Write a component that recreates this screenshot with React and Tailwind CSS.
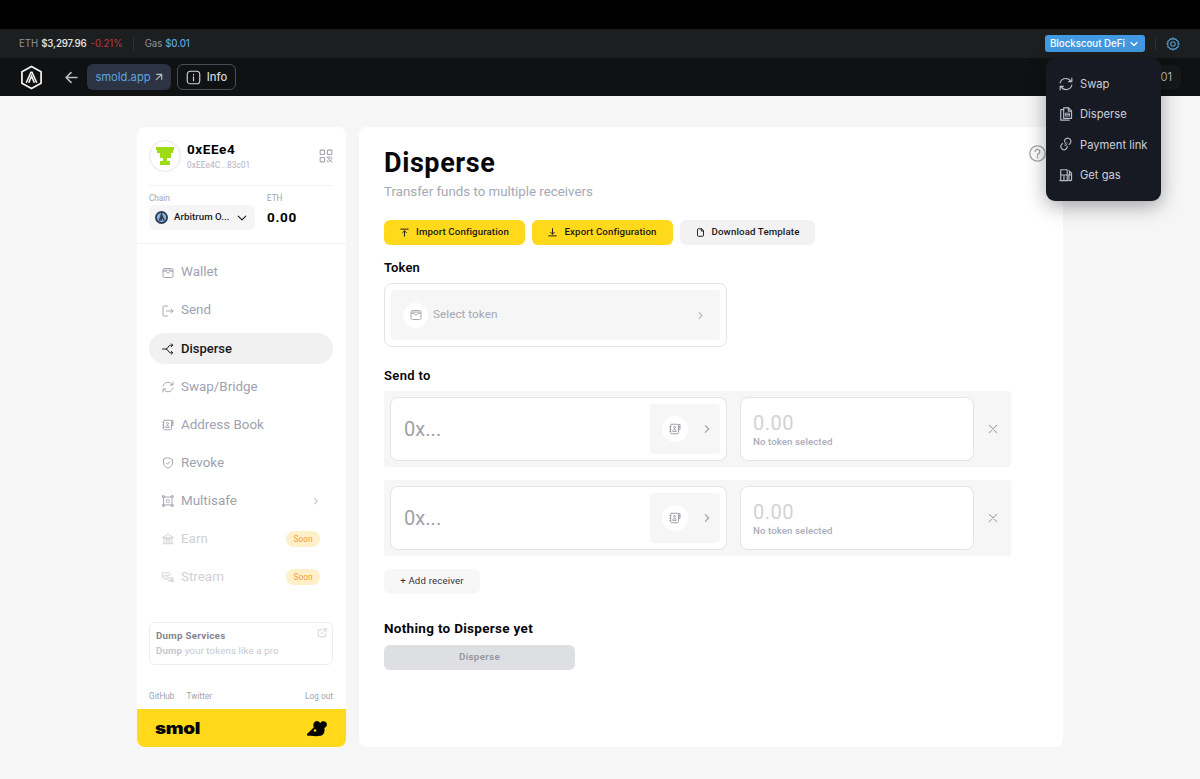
import React from "react";

const paths = {
  wallet: (
    <>
      <rect x="2" y="3" width="20" height="18" rx="3" />
      <path d="M2 8.5h6c.5 0 .8.4 1 1a3.1 3.1 0 0 0 6 0c.2-.6.5-1 1-1h6" />
      <path d="M5 6.2h14" />
    </>
  ),
  send: (
    <>
      <path d="M11 2H4a2 2 0 0 0-2 2v16a2 2 0 0 0 2 2h7" />
      <path d="M9 12h13M18 8l4 4-4 4" />
    </>
  ),
  disperse: (
    <>
      <path d="M1 12h8M9 12c3 0 3-7.500 8-7.500h4M9 12c3 0 3 7.500 8 7.500h4" />
      <path d="M18.500 1.500l3 3-3 3M18.500 16.500l3 3-3 3" />
    </>
  ),
  swap: (
    <>
      <path d="M2 10C3 5.500 7 2.500 12 2.500c3.600 0 6.700 1.900 8.400 5M22 2v6h-5.500" />
      <path d="M22 14c-1 4.500-5 7.500-10 7.500-3.600 0-6.700-1.900-8.400-5M2 22v-6h5.500" />
    </>
  ),
  book: (
    <>
      <rect x="3" y="2.500" width="16" height="19" rx="2.500" />
      <path d="M19 3h3v5h-3M19 8h3v5h-3M1.500 7H4M1.500 12H4M1.500 17H4" />
      <circle cx="11" cy="9" r="2" />
      <path d="M7.500 16c0-4 7-4 7 0z" />
    </>
  ),
  revoke: (
    <>
      <path d="M12 1.500 21 5v7c0 5-4 8.500-9 10.500C7 20.500 3 17 3 12V5z" />
      <path d="m8.500 12 2.500 2.500 4.500-5" />
    </>
  ),
  multisafe: (
    <>
      <rect x="4" y="4" width="16" height="16" />
      <rect x="1.500" y="1.500" width="3" height="3" />
      <rect x="19.500" y="1.500" width="3" height="3" />
      <rect x="1.500" y="19.500" width="3" height="3" />
      <rect x="19.500" y="19.500" width="3" height="3" />
      <path d="M9.500 9.500h5v5h-5z" strokeWidth="1.400" />
    </>
  ),
  earn: (
    <>
      <path d="M2 8.500 12 2l10 6.500zM4 9v11M20 9v11M2 21.500h20M8.500 12v7M12 12v7M15.500 12v7M6 12h12" />
    </>
  ),
  stream: (
    <>
      <path d="M1 3h4l2 2 3-2h4l3 4-3 2-4-1-3 2H2M1 6v7l4 3h4M9 13l5 7h8v-6h-8l-3-3M17 17h2v4h4" />
    </>
  ),
  chevron: <path d="m8 4 8 8-8 8" />,
  down: <path d="m3 7.500 9 9 9-9" />,
  close: <path d="M3 3l18 18M21 3 3 21" />,
  external: (
    <>
      <path d="M11 4H5a2 2 0 0 0-2 2v13a2 2 0 0 0 2 2h13a2 2 0 0 0 2-2v-6" />
      <path d="M10 14 22 2M15 2h7v7" />
    </>
  ),
  importUp: <path d="M2 3h20M12 22V8M7 12.500l5-5 5 5" />,
  exportDown: <path d="M2 21h20M12 2v14M7 11.500l5 5 5-5" />,
  file: (
    <>
      <path d="M14 2H6a2 2 0 0 0-2 2v16a2 2 0 0 0 2 2h12a2 2 0 0 0 2-2V8z" />
      <path d="M14 2v6h6" />
    </>
  ),
  back: <path d="M22 12H2M11 3l-9 9 9 9" />,
  openUp: <path d="M4 20 20 4M5 4h15v15" />,
  info: (
    <>
      <rect x="2" y="2" width="20" height="20" rx="5" />
      <path d="M12 11v6M12 7v1" />
    </>
  ),
  help: (
    <>
      <circle cx="12" cy="12" r="10.800" />
      <path d="M8.800 9.200a3.200 3.200 0 1 1 4.800 3c-1.200.6-1.600 1.100-1.600 2.300M12 17v1.200" />
    </>
  ),
  qr: (
    <>
      <rect x="2" y="2" width="7.500" height="7.500" rx="1" />
      <rect x="14.500" y="2" width="7.500" height="7.500" rx="1" />
      <rect x="2" y="14.500" width="7.500" height="7.500" rx="1" />
      <path d="M14 14h2M18 14h1M22 14v.1M16 17h2M21 17h1M14 20v.1M18 20h2M21 22h1M15 22h1" />
    </>
  ),
  docs: (
    <>
      <path d="M8 1.500h8.500L21.500 6.500v13H8z" />
      <path d="M8 4.500H3v18h14.500M16 1.500V7h5.500" />
      <path d="M11.500 10.500h6.500v5h-6.500zM11.500 13h6.500" strokeWidth="1.500" />
    </>
  ),
  payment: (
    <>
      <path d="M9.500 8V6.500a5.500 5.500 0 1 1 9.700 4.500l-1.700 1.800" />
      <path d="M6 11.200 4.500 12.800a5.500 5.500 0 1 0 9.500 4.700V16" />
      <path d="M13.800 10c-2.500-1.300-4.800.9-2 2s1 3.500-2 2" strokeWidth="1.600" />
    </>
  ),
  gas: (
    <>
      <path d="M3 21V3h11v18M1.500 21.500h14M3 12h11M8.500 12v9M14 12h3v7.500a2 2 0 0 0 4.500 0V9L17 4.500M21.500 12H18V7" />
    </>
  ),
  gear: (
    <>
      <circle cx="12" cy="12" r="3.800" />
      <path d="M12 1.500 14 4l3-.7 1.300 2.600 2.700 1.300-.6 3 2.100 1.800-2.100 2 .6 3-2.700 1.200L17 20.700l-3-.7-2 2.500-2-2.500-3 .7-1.300-2.500L3 17l.6-3-2.100-2 2.100-1.800-.6-3 2.700-1.300L7 3.300l3 .7z" />
    </>
  ),
};

function Icon({ name, className = "size-3", w = 2 }) {
  return (
    <svg viewBox="0 0 24 24" fill="none" stroke="currentColor" strokeWidth={w} strokeLinecap="round" strokeLinejoin="round" className={`shrink-0 ${className}`}>
      {paths[name]}
    </svg>
  );
}

function TopBars() {
  return (
    <header className="relative font-['Inter',sans-serif]">
      <div className="h-[29px] bg-black" />
      <div className="flex h-[29px] items-center bg-[#1c1e20] pl-[19px] pr-[20px] text-[9.700px] tracking-[-0.050px] text-[#8f9398]">
        <span className="pt-[2px]">ETH</span>
        <span className="ml-[3px] pt-[2px] font-semibold tracking-[-0.200px] text-[#dedede]">$3,297.96</span>
        <span className="ml-[4px] pt-[2px] text-[#b9393f]">-0.21%</span>
        <span className="ml-[10px] h-3 w-px bg-[#303336]" />
        <span className="ml-[11px] pt-[2px]">Gas</span>
        <span className="ml-[3px] pt-[2px] font-medium tracking-[-0.200px] text-[#5aa3dc]">$0.01</span>
        <button className="ml-auto flex h-[17px] w-[100px] items-center justify-between rounded-[3px] bg-[#4299e1] pl-[5px] pr-[7px] text-[9.700px] font-medium tracking-normal text-white">
          <span className="whitespace-nowrap pt-[2px]">Blockscout DeFi</span>
          <Icon name="down" className="size-[8px]" w={3.600} />
        </button>
        <span className="ml-[10px] h-3 w-px bg-[#303336]" />
        <Icon name="gear" className="ml-[10px] size-[14px] text-[#4f9bd2]" w={2} />
      </div>
      <div className="flex h-[38px] items-center bg-[#101112] pl-[20px] pr-[19px]">
        <svg viewBox="0 0 24 26" className="h-[25px] w-[23px] shrink-0" fill="none" stroke="#f2f2f2">
          <path d="M12 1.500 22 7v12l-10 5.500L2 19V7z" strokeWidth="1.800" strokeLinejoin="round" />
          <path d="M6.500 18.500 11.500 7.500h1l5 11M9.200 18.500 12 11.500l3 7" strokeWidth="1.700" />
        </svg>
        <Icon name="back" className="ml-[22px] size-[13px] text-[#b6bdc8]" w={3} />
        <a className="ml-[9px] flex h-[26px] w-[84px] items-center justify-center gap-1 rounded-md bg-[#2c3444] text-[11.200px] text-[#5ea5dc]">
          smold.app
          <Icon name="openUp" className="size-[8px] text-[#b6bdc8]" w={3.500} />
        </a>
        <a className="ml-[6px] flex h-[26px] w-[59px] items-center justify-center gap-[6px] rounded-md border-[1.500px] border-[#4a4e57] text-[11.200px] font-medium text-[#d3d6db]">
          <Icon name="info" className="size-[15px]" w={1.800} />
          Info
        </a>
        <span className="ml-auto flex h-[24px] w-[100px] items-center justify-end rounded-md bg-[#17181a] pr-[9px] text-[11.200px] text-[#b4b4b4]">01</span>
      </div>
      <nav className="absolute left-[1046px] top-[58px] flex h-[143px] w-[115px] flex-col rounded-[9px] bg-[#171923] pl-[13px] pt-[11px] text-[11.200px] text-[#ccd0d7] shadow-[0_5px_20px_rgba(0,0,0,0.35)]">
        {[
          ["swap", "Swap"],
          ["docs", "Disperse"],
          ["payment", "Payment link"],
          ["gas", "Get gas"],
        ].map(([icon, label]) => (
          <a key={icon} className="flex h-[30.200px] items-center gap-[7px] whitespace-nowrap">
            <Icon name={icon} className="size-[14px] text-[#b5bdc8]" w={2} />
            <span className="pt-px">{label}</span>
          </a>
        ))}
      </nav>
    </header>
  );
}

const navItems = [
  ["wallet", "Wallet"],
  ["send", "Send"],
  ["disperse", "Disperse"],
  ["swap", "Swap/Bridge"],
  ["book", "Address Book"],
  ["revoke", "Revoke"],
  ["multisafe", "Multisafe"],
  ["earn", "Earn"],
  ["stream", "Stream"],
];

function Sidebar() {
  return (
    <aside className="flex h-[620px] w-[209px] flex-col overflow-hidden rounded-lg bg-white">
      <div className="ml-3 mr-[13px] flex h-[59px] shrink-0 items-center border-b border-[#f3f3f5]">
        <div className="flex size-8 items-center justify-center rounded-full border border-[#e6e6ec]">
          <svg viewBox="0 0 18 18" className="size-[18px]" fill="#9ddb13">
            <path d="M0 0h18v3h-1v3h-2v5h-4v3h3v4H4v-4h3v-3H4V6H1V3H0z" />
          </svg>
        </div>
        <div className="ml-[6px] flex flex-col">
          <span className="text-[13.500px] font-bold leading-[15px] tracking-[0.600px] text-black">0xEEe4</span>
          <span className="mt-[3px] text-[8.300px] leading-[10px] tracking-[0.080px] text-[#b2b3bf]">0xEEe4C...83c01</span>
        </div>
        <Icon name="qr" className="ml-auto size-[14px] text-[#a2a3b0]" w={1.900} />
      </div>
      <div className="flex h-[58px] shrink-0 border-b border-[#f3f3f5] px-3 pt-[6px]">
        <div className="w-[106px]">
          <div className="text-[8.200px] leading-[12px] text-[#a2a3b0]">Chain</div>
          <div className="mt-px flex h-[25px] items-center rounded-md bg-[#f5f5f5] px-[6px] text-[9.700px] font-medium text-[#18181b]">
            <svg viewBox="0 0 24 24" className="mr-[6px] size-[13px]">
              <circle cx="12" cy="12" r="12" fill="#2d3c56" />
              <circle cx="12" cy="12" r="8.500" fill="#8db5de" />
              <path d="m8 18 4-12 5 12M11 18l2-7" fill="none" stroke="#2d3c56" strokeWidth="2.500" />
            </svg>
            <span className="tracking-[0.050px]">Arbitrum O...</span>
            <Icon name="down" className="ml-auto mr-[2px] size-[10px]" w={2.600} />
          </div>
        </div>
        <div className="ml-3">
          <div className="text-[8.200px] leading-[12px] text-[#a2a3b0]">ETH</div>
          <div className="mt-px text-[13.500px] font-bold leading-[25px] tracking-[0.700px] text-black">0.00</div>
        </div>
      </div>
      <nav className="ml-3 mr-[13px] mt-[13px] flex flex-col gap-[7.060px]">
        {navItems.map(([icon, label], i) => (
          <a
            key={icon}
            className={`flex h-[31px] items-center rounded-full pl-[13px] ${
              i === 2 ? "bg-[#f1f1f1] text-[13px] font-medium text-[#18181b]" : i > 6 ? "text-[13.400px] text-[#d0d0d5]" : "text-[13.400px] text-[#a0a2af]"
            }`}
          >
            <Icon name={icon} className="mr-[7px] size-3" w={1.900} />
            {label}
            {i === 6 && <Icon name="chevron" className="ml-auto mr-[13px] size-2" w={3} />}
            {i > 6 && (
              <span className="ml-auto mr-[13px] flex h-4 w-[34px] items-center justify-center rounded-full bg-[#fff0c9] text-[8.300px] font-normal tracking-normal text-[#f59a35]">Soon</span>
            )}
          </a>
        ))}
      </nav>
      <div className="ml-3 mr-[13px] mt-[30px] flex h-[43px] shrink-0 justify-between rounded-md border border-[#ededf1] pl-[6px] pr-[5px] pt-[6px]">
        <div>
          <div className="text-[9.700px] font-bold leading-[13px] tracking-[0.300px] text-[#83848f]">Dump Services</div>
          <div className="text-[9.700px] leading-[18px] tracking-[0.130px] text-[#c6c7d1]"><b>Dump</b> your tokens like a pro</div>
        </div>
        <Icon name="external" className="mt-[-1px] size-[10px] text-[#cfcfd6]" w={2.200} />
      </div>
      <div className="ml-3 mr-[13px] mt-auto flex h-[26px] shrink-0 items-center gap-3 pt-px text-[8.200px] tracking-[0.050px] text-[#a0a1ac]">
        <span>GitHub</span>
        <span>Twitter</span>
        <span className="ml-auto">Log out</span>
      </div>
      <div className="flex h-[38px] shrink-0 items-center justify-between bg-[#ffd91a] px-[18px]">
        <span className="origin-left scale-x-[1.180] font-['Inter',sans-serif] text-[16px] font-black leading-none tracking-[-0.300px] text-black">smol</span>
        <svg viewBox="0 0 22 17" className="h-[17px] w-[22px]">
          <path d="M1 14 7.800 7.500C6.500 4 8.300 1 11 1c1.600 0 2.700 1 3.200 2.300C14.800 1.600 16.300 1 17.800 1.200c2.200.3 3.400 2 3.100 3.900-.3 1.500-1.200 2.500-2.600 2.900 1 4-.7 7.200-3.800 7.800C10 16.700 4 15.800 1 15.500z" fill="#050505" />
          <circle cx="9" cy="10.500" r="1.300" fill="#ffd91a" />
        </svg>
      </div>
    </aside>
  );
}

function ActionButton({ icon, children, className }) {
  return (
    <button className={`flex h-[25px] items-center justify-center whitespace-nowrap rounded-md text-[9.700px] font-medium tracking-[0.120px] text-[#18181b] ${className}`}>
      <Icon name={icon} className="mr-[7px] size-[9px]" w={2.500} />
      {children}
    </button>
  );
}

function Receiver() {
  return (
    <div className="flex h-[76px] w-[627px] items-center rounded-[3px] bg-[#f6f6f6] pl-[6px]">
      <div className="flex h-16 w-[337px] items-center rounded-lg border border-[#e4e4e7] bg-white pl-[13px] pr-[6px]">
        <span className="text-[20px] tracking-[0.050px] text-[#a0a1ac]">0x...</span>
        <div className="ml-auto flex h-[50px] w-[70px] items-center rounded-[4px] bg-[#f6f6f6] pl-3">
          <span className="flex size-[26px] items-center justify-center rounded-full bg-white">
            <Icon name="book" className="size-3 text-[#a0a1ac]" w={2} />
          </span>
          <Icon name="chevron" className="ml-[14px] size-[10px] text-[#a0a1ac]" w={2.700} />
        </div>
      </div>
      <div className="ml-[13px] flex h-16 w-[234px] flex-col rounded-lg border border-[#e4e4e7] bg-white pl-3 pt-[14px]">
        <span className="text-[20px] leading-[23px] tracking-[0.500px] text-[#d2d2d7]">0.00</span>
        <span className="text-[9.700px] font-medium leading-[14px] tracking-[0.080px] text-[#abadb9]">No token selected</span>
      </div>
      <Icon name="close" className="ml-[14px] size-[10px] text-[#9d9ea8]" w={2.500} />
    </div>
  );
}

function MainPanel() {
  return (
    <main className="flex h-[620px] w-[704px] flex-col items-start rounded-lg bg-white pl-[25px]">
      <div className="flex w-full items-start justify-between pr-[17px]">
        <h1 className="mt-[21px] text-[27px] font-bold leading-[31px] tracking-[0.600px] text-[#08080a]">Disperse</h1>
        <Icon name="help" className="mt-[18px] size-[17px] text-[#a5a6a8]" w={1.900} />
      </div>
      <p className="mt-[5px] text-[13.300px] leading-4 tracking-normal text-[#a5a7b4]">Transfer funds to multiple receivers</p>
      <div className="mt-[20px] flex gap-[7px]">
        <ActionButton icon="importUp" className="w-[141px] bg-[#ffd91a]">Import Configuration</ActionButton>
        <ActionButton icon="exportDown" className="w-[141px] bg-[#ffd91a]">Export Configuration</ActionButton>
        <ActionButton icon="file" className="w-[135px] bg-[#f2f2f2]">Download Template</ActionButton>
      </div>
      <h2 className="mt-[15px] text-[13px] font-semibold leading-4 tracking-[0.100px] text-[#08080a]">Token</h2>
      <div className="mt-[7px] h-16 w-[343px] rounded-lg border border-[#e4e4e7] p-[6px]">
        <div className="flex h-[50px] items-center rounded-[3px] bg-[#f6f6f6] pl-3 pr-[15px] text-[11.800px] text-[#a5a7b4]">
          <span className="mr-[5px] flex size-[25px] items-center justify-center rounded-full bg-white">
            <Icon name="wallet" className="size-3" w={1.900} />
          </span>
          Select token
          <Icon name="chevron" className="ml-auto size-[9px]" w={2.800} />
        </div>
      </div>
      <h2 className="mt-[21px] text-[13px] font-semibold leading-4 tracking-[0.350px] text-[#08080a]">Send to</h2>
      <div className="mt-[7px] flex flex-col gap-[13px]">
        <Receiver />
        <Receiver />
      </div>
      <button className="mt-[13px] h-[25px] w-[96px] rounded-md bg-[#f7f7f7] text-[9.700px] tracking-[0.150px] text-[#30343c]">+ Add receiver</button>
      <h2 className="mt-[26px] text-[13.500px] font-bold leading-4 tracking-[0.300px] text-[#08080a]">Nothing to Disperse yet</h2>
      <button className="mt-[9px] h-[25px] w-[191px] rounded-md bg-[#dedfe3] text-[9.700px] font-semibold tracking-[0.350px] text-[#94959d]">Disperse</button>
    </main>
  );
}

export default function App() {
  return (
    <div className="h-[779px] w-[1200px] overflow-hidden bg-[#f6f6f6] font-['Roboto',sans-serif]">
      <TopBars />
      <div className="flex gap-[13px] pl-[137px] pt-[31px]">
        <Sidebar />
        <MainPanel />
      </div>
    </div>
  );
}
